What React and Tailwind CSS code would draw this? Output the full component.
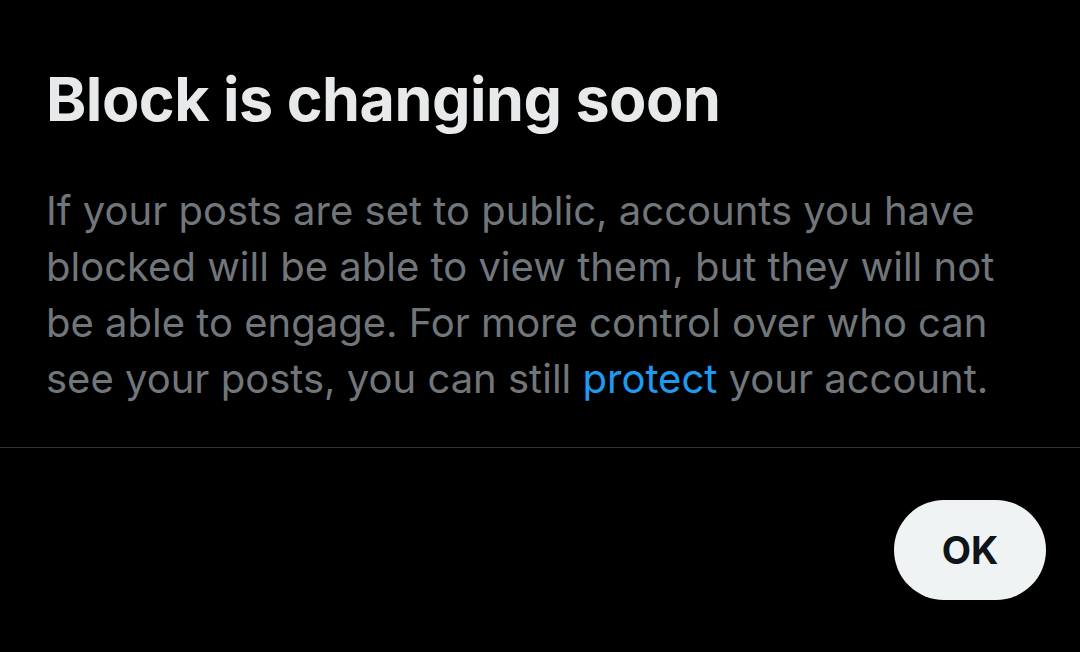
export default function App() {
  return (
    <div className="w-[1080px] h-[652px] bg-black flex flex-col font-['Inter',sans-serif] overflow-hidden">
      <div className="px-[46px] pt-[63px] pb-[40px] flex flex-col gap-[48px]">
        <h1 className="text-[61px] leading-[72px] font-bold text-[#e7e9ea] tracking-[-0.5px]">
          Block is changing soon
        </h1>
        <p className="text-[40px] leading-[56px] text-[#71767b]">
          If your posts are set to public, accounts you have blocked will be able to view them, but they will not be
          able to engage. For more control over who can see your posts, you can still{' '}
          <span className="text-[#1d9bf0]">protect</span> your account.
        </p>
      </div>
      <div className="h-px bg-[#2f3336]" />
      <div className="flex justify-end px-[34px] pt-[52px]">
        <button className="w-[152px] h-[100px] rounded-full bg-[#eff3f4] text-[#0f1419] text-[38px] font-bold">
          OK
        </button>
      </div>
    </div>
  );
}
